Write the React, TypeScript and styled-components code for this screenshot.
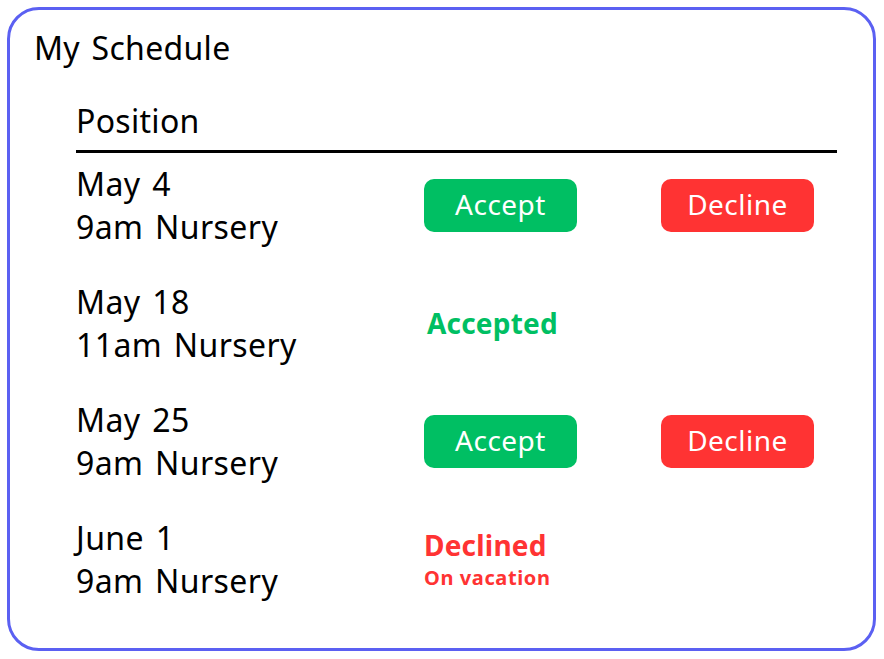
import React from "react";
import styled, { createGlobalStyle } from "styled-components";

const GlobalStyle = createGlobalStyle`
  html, body { margin: 0; padding: 0; background: #ffffff; }
  body { padding: 7px 8px 8px 7px; font-family: "Noto Sans", "DejaVu Sans", sans-serif; color: #000; }
  * { box-sizing: border-box; }
`;

const Frame = styled.div`
  height: 644px;
  border: 3px solid #5b60f2;
  border-radius: 32px;
  padding: 16px 24px 0 24px;
`;

const Title = styled.h1`
  margin: 0;
  font-size: 32px;
  font-weight: 400;
  line-height: 44px;
  letter-spacing: 0.3px;
  word-spacing: 3px;
`;

const Table = styled.div`
  margin: 29px 0 0 42px;
  width: 761px;
`;

const Header = styled.div`
  font-size: 32px;
  line-height: 44px;
  letter-spacing: 0.3px;
  padding-bottom: 7px;
  border-bottom: 3px solid #000;
`;

const Row = styled.div`
  display: grid;
  grid-template-columns: 348px 237px 1fr;
  align-items: center;
  padding-top: 9px;
  padding-bottom: 23px;
`;

const When = styled.div`
  font-size: 32px;
  line-height: 43px;
  letter-spacing: 0.4px;
  word-spacing: 3px;
  white-space: nowrap;
`;

const Button = styled.button<{ $tone: "accept" | "decline" }>`
  width: 153px;
  height: 53px;
  border: none;
  border-radius: 10px;
  background: ${(p) => (p.$tone === "accept" ? "#00bf63" : "#ff3333")};
  color: #ffffff;
  font-family: inherit;
  font-size: 28px;
  letter-spacing: 0.5px;
  line-height: 1;
  padding: 0 0 2px;
  cursor: pointer;
`;

const Status = styled.div<{ $tone: "accept" | "decline" }>`
  color: ${(p) => (p.$tone === "accept" ? "#00bf63" : "#ff3333")};
  font-weight: 700;
  font-size: 28px;
  line-height: 32px;
  letter-spacing: 0.2px;
  padding-left: ${(p) => (p.$tone === "accept" ? "3px" : "0")};
`;

const Note = styled.div`
  margin-top: 5px;
  font-size: 20px;
  line-height: 24px;
  font-weight: 700;
  letter-spacing: 0.6px;
`;

type Item = {
  date: string;
  shift: string;
  state: "pending" | "accepted" | "declined";
  note?: string;
};

const items: Item[] = [
  { date: "May 4", shift: "9am Nursery", state: "pending" },
  { date: "May 18", shift: "11am Nursery", state: "accepted" },
  { date: "May 25", shift: "9am Nursery", state: "pending" },
  { date: "June 1", shift: "9am Nursery", state: "declined", note: "On vacation" },
];

export default function App() {
  return (
    <>
      <GlobalStyle />
      <Frame>
        <Title>My Schedule</Title>
        <Table>
          <Header>Position</Header>
          {items.map((it) => (
            <Row key={it.date}>
              <When>
                {it.date}
                <br />
                {it.shift}
              </When>
              {it.state === "pending" ? (
                <>
                  <div>
                    <Button $tone="accept">Accept</Button>
                  </div>
                  <div>
                    <Button $tone="decline">Decline</Button>
                  </div>
                </>
              ) : it.state === "accepted" ? (
                <Status $tone="accept">Accepted</Status>
              ) : (
                <Status $tone="decline">
                  Declined
                  {it.note && <Note>{it.note}</Note>}
                </Status>
              )}
            </Row>
          ))}
        </Table>
      </Frame>
    </>
  );
}
